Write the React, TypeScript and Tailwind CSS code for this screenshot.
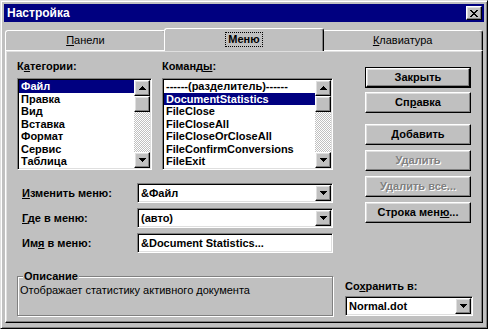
import React from 'react'

const raised =
  'border border-t-white border-l-white border-r-black border-b-black shadow-[inset_-1px_-1px_#808080,inset_1px_1px_#dfdfdf]'
const sunken =
  'border border-t-[#808080] border-l-[#808080] border-r-white border-b-white shadow-[inset_1px_1px_#000,inset_-1px_-1px_#dfdfdf] p-[1px]'

const closeRows = ['11000011', '01100110', '00111100', '00011000', '00111100', '01100110', '11000011']

function CloseGlyph() {
  return (
    <svg width="8" height="7" viewBox="0 0 8 7" shapeRendering="crispEdges">
      {closeRows.map((row, y) =>
        row.split('').map((c, x) => (c === '1' ? <rect key={`${x}-${y}`} x={x} y={y} width="1" height="1" fill="#000" /> : null))
      )}
    </svg>
  )
}

function Arrow({ down = false }: { down?: boolean }) {
  return (
    <svg width="7" height="4" viewBox="0 0 7 4" shapeRendering="crispEdges" className={down ? 'rotate-180' : ''}>
      <path d="M3 0h1v1h1v1h1v1h1v1H0V3h1V2h1V1h1z" fill="#000" />
    </svg>
  )
}

function ArrowButton({ down = false }: { down?: boolean }) {
  return (
    <div className={`flex h-[16px] w-[16px] shrink-0 items-center justify-center bg-[#c0c0c0] ${raised}`}>
      <Arrow down={down} />
    </div>
  )
}

function ScrollBar() {
  return (
    <div className="flex w-[16px] shrink-0 flex-col">
      <ArrowButton />
      <div className={`h-[16px] w-[16px] shrink-0 bg-[#c0c0c0] ${raised}`} />
      <div className="flex-1 bg-[image:repeating-conic-gradient(#c0c0c0_0%_25%,#ffffff_0%_50%)] bg-[length:2px_2px]" />
      <ArrowButton down />
    </div>
  )
}

function ListBox({ items, selected }: { items: string[]; selected: number }) {
  return (
    <div className={`flex h-[92px] bg-white ${sunken}`}>
      <div className="flex-1 overflow-hidden">
        {items.map((item, i) => (
          <div
            key={item}
            className={`h-[12.5px] whitespace-nowrap pl-[2px] leading-[12.5px] ${i === selected ? 'bg-[#000080] text-white' : ''}`}
          >
            {item}
          </div>
        ))}
      </div>
      <ScrollBar />
    </div>
  )
}

function Combo({ value, arrow = true }: { value: string; arrow?: boolean }) {
  return (
    <div className={`flex h-[20px] flex-1 items-center bg-white ${sunken}`}>
      <span className="flex-1 whitespace-nowrap pl-[2px] leading-[16px]">{value}</span>
      {arrow && <ArrowButton down />}
    </div>
  )
}

function Button({ children, disabled = false, isDefault = false, className = '' }: { children: React.ReactNode; disabled?: boolean; isDefault?: boolean; className?: string }) {
  const face = (
    <div
      className={`flex h-full w-full items-center justify-center bg-[#c0c0c0] ${raised} ${disabled ? 'text-[#808080] [text-shadow:1px_1px_0_#fff]' : ''}`}
    >
      {children}
    </div>
  )
  return (
    <div className={`h-[21px] w-[106px] ${isDefault ? 'border border-black' : ''} ${className}`}>{face}</div>
  )
}

function Tab({ children, active = false }: { children: React.ReactNode; active?: boolean }) {
  if (active) {
    return (
      <div className="relative z-20 -mx-[2px] -mb-[1px] flex h-[23px] flex-1 items-center justify-center rounded-t-[3px] border-t border-l border-r border-t-white border-l-white border-r-black bg-[#c0c0c0] pb-[2px] shadow-[inset_-1px_0_#808080]">
        <span className="border border-dotted border-black px-[2px] leading-[13px]">{children}</span>
      </div>
    )
  }
  return (
    <div className="flex h-[20px] flex-1 items-center justify-center rounded-t-[3px] border-t border-l border-r border-t-white border-l-white border-r-black bg-[#c0c0c0] font-normal shadow-[inset_-1px_0_#808080]">
      {children}
    </div>
  )
}

const categories = ['Файл', 'Правка', 'Вид', 'Вставка', 'Формат', 'Сервис', 'Таблица']
const commands = [
  '------(разделитель)------',
  'DocumentStatistics',
  'FileClose',
  'FileCloseAll',
  'FileCloseOrCloseAll',
  'FileConfirmConversions',
  'FileExit',
]

export default function App() {
  return (
    <div className="min-h-screen bg-white font-['Liberation_Sans',Arial,sans-serif] text-[11px] font-bold text-black">
      <div className="flex h-[329px] w-[488px] flex-col border border-t-[#dfdfdf] border-l-[#dfdfdf] border-r-black border-b-black bg-[#c0c0c0] p-[3px] shadow-[inset_1px_1px_#fff,inset_-1px_-1px_#808080]">
        {/* Title bar */}
        <div className="flex h-[18px] shrink-0 items-center justify-between bg-[#000080] pl-[3px] pr-[2px]">
          <span className="text-[12px] leading-[18px] text-white">Настройка</span>
          <div className={`flex h-[14px] w-[16px] items-center justify-center bg-[#c0c0c0] ${raised}`}>
            <CloseGlyph />
          </div>
        </div>

        <div className="mx-[1px] mt-[6px] flex flex-1 flex-col pb-[2px]">
          {/* Tabs */}
          <div className="relative z-10 flex h-[22px] shrink-0 items-end">
            <Tab>
              <span>
                <u>П</u>анели
              </span>
            </Tab>
            <Tab active>Меню</Tab>
            <Tab>
              <span>
                <u>К</u>лавиатура
              </span>
            </Tab>
          </div>

          {/* Panel */}
          <div className="flex flex-1 border border-t-white border-l-white border-r-black border-b-black pb-[6px] pl-[11px] pt-[8px] shadow-[inset_-1px_-1px_#808080,inset_1px_1px_#dfdfdf]">
            <div className="flex w-[316px] flex-col">
              <div className="flex gap-[10px]">
                <div className="w-[135px]">
                  <div className="mb-[5px] h-[14px] leading-[14px]">
                    К<u>а</u>тегории:
                  </div>
                  <ListBox items={categories} selected={0} />
                </div>
                <div className="w-[171px]">
                  <div className="mb-[5px] h-[14px] leading-[14px]">
                    Команд<u>ы</u>:
                  </div>
                  <ListBox items={commands} selected={1} />
                </div>
              </div>

              <div className="mt-[13px] flex flex-col gap-[5px]">
                <div className="flex items-center">
                  <div className="w-[120px] pl-[5px]">
                    <u>И</u>зменить меню:
                  </div>
                  <Combo value="&Файл" />
                </div>
                <div className="flex items-center">
                  <div className="w-[120px] pl-[5px]">
                    <u>Г</u>де в меню:
                  </div>
                  <Combo value="(авто)" />
                </div>
                <div className="flex items-center">
                  <div className="w-[120px] pl-[5px]">
                    Им<u>я</u> в меню:
                  </div>
                  <Combo value="&Document Statistics..." arrow={false} />
                </div>
              </div>

              <fieldset className="mt-auto h-[47px] border border-[#808080] px-[2px] shadow-[inset_1px_1px_#fff,1px_1px_#fff]">
                <legend className="ml-[3px] bg-[#c0c0c0] px-[1px] leading-[14px]">Описание</legend>
                <div className="font-normal leading-[14px]">Отображает статистику активного документа</div>
              </fieldset>
            </div>

            <div className="ml-[12px] flex w-[128px] flex-col">
              <div className="mt-[8px] flex flex-col pl-[20px]">
                <Button isDefault>Закрыть</Button>
                <Button className="mt-[4px]">
                  <span>
                    Сп<u>р</u>авка
                  </span>
                </Button>
                <Button className="mt-[11px]">
                  <span>
                    <u>Д</u>обавить
                  </span>
                </Button>
                <Button className="mt-[5px]" disabled>
                  Удалить
                </Button>
                <Button className="mt-[5px]" disabled>
                  Удалить все...
                </Button>
                <Button className="mt-[5px]">
                  <span>
                    Строка мен<u>ю</u>...
                  </span>
                </Button>
              </div>

              <div className="mt-auto">
                <div className="mb-[3px] leading-[14px]">
                  Со<u>х</u>ранить в:
                </div>
                <div className="flex">
                  <Combo value="Normal.dot" />
                </div>
              </div>
            </div>
          </div>
        </div>
      </div>
    </div>
  )
}
